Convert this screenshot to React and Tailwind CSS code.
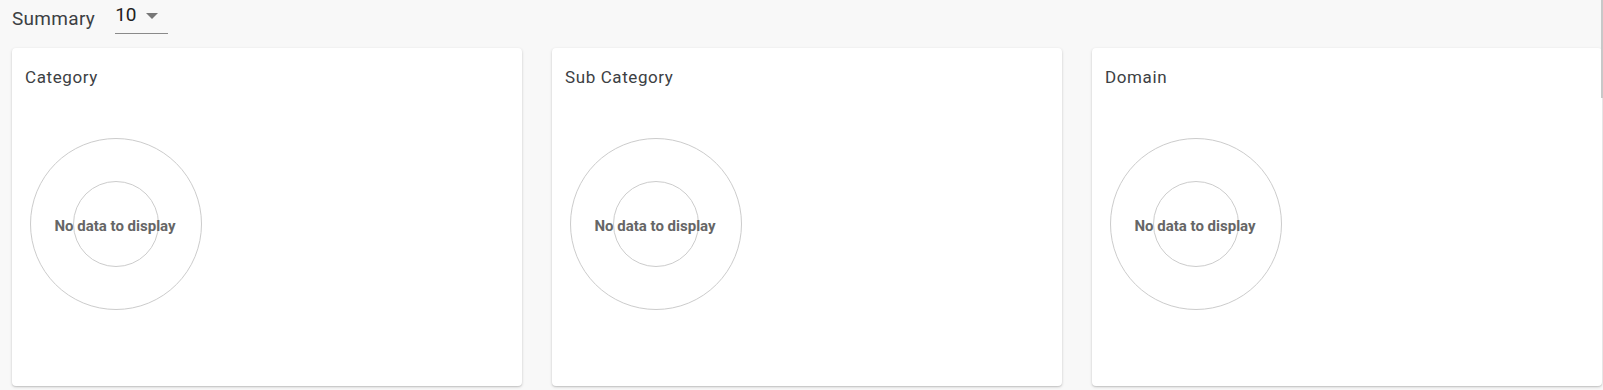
import React from 'react'

const cards = ['Category', 'Sub Category', 'Domain']

function NoData() {
  return (
    <div className="relative w-[180px] h-[180px]">
      <svg width="180" height="180" viewBox="0 0 180 180" className="absolute inset-0">
        <circle cx="90" cy="90" r="85.5" fill="none" stroke="#cccccc" strokeWidth="1" />
        <circle cx="90" cy="90" r="42.5" fill="none" stroke="#cccccc" strokeWidth="1" />
      </svg>
      <div className="absolute inset-0 flex items-center justify-center pt-[4px] pr-[2px]">
        <span className="text-[15px] font-bold text-[#666666]">No data to display</span>
      </div>
    </div>
  )
}

export default function App() {
  return (
    <div className="relative w-[1603px] h-[390px] bg-[#f8f8f8] overflow-hidden font-['Roboto',sans-serif]">
      {/* header */}
      <div className="flex items-start h-[48px] pl-[12px]">
        <span className="mt-[7px] text-[19px] leading-[24px] tracking-[0.3px] text-[#3c4043]">Summary</span>
        <div className="ml-[20px] mt-[4px] w-[53px] h-[30px] border-b border-[#8a8a8a] flex items-start">
          <span className="text-[19px] leading-[22px] text-[#222]">10</span>
          <svg width="14" height="7" viewBox="0 0 14 7" className="ml-[9px] mt-[9px]">
            <path d="M1 0 L13 0 L7 6 Z" fill="#777777" />
          </svg>
        </div>
      </div>

      {/* cards */}
      <div className="flex gap-[30px] pl-[12px]">
        {cards.map((c) => (
          <div
            key={c}
            className="w-[510px] h-[338px] bg-white rounded-[4px] shadow-[0_1px_3px_rgba(0,0,0,0.18),0_1px_1px_rgba(0,0,0,0.08)] shrink-0"
          >
            <div className="pl-[13px] pt-[19px] text-[17px] leading-[20px] tracking-[0.6px] text-[#3c4043]">{c}</div>
            <div className="pl-[14px] pt-[47px]">
              <NoData />
            </div>
          </div>
        ))}
      </div>

      <div className="absolute right-0 top-0 w-[2px] h-[98px] bg-[#c8c8c8]" />
    </div>
  )
}
